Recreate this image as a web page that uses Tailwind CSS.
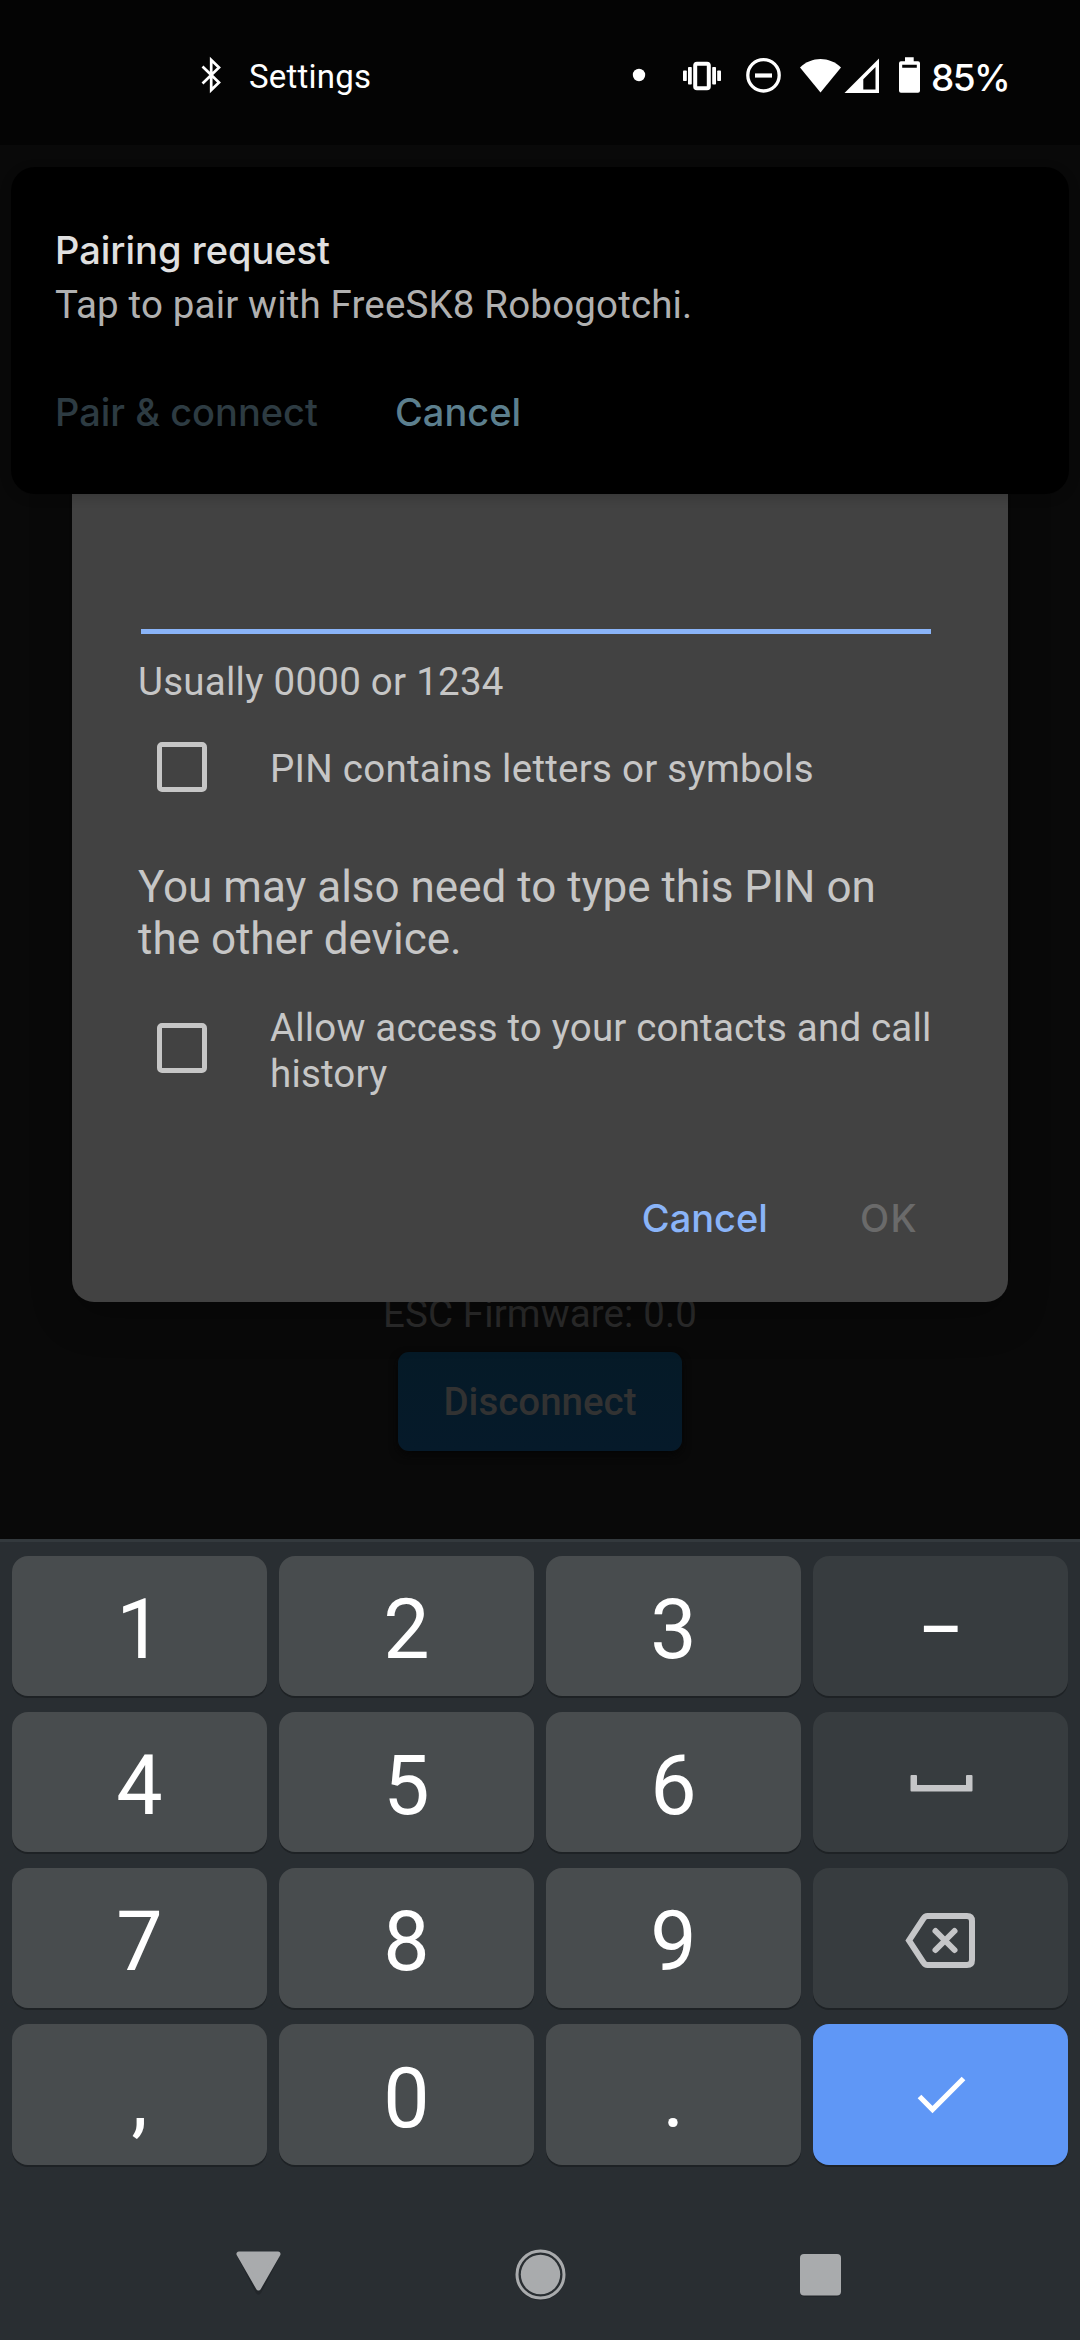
<!DOCTYPE html>
<html lang="en">
<head>
<meta charset="utf-8">
<title>Pairing request</title>
<script src="https://cdn.jsdelivr.net/npm/@tailwindcss/browser@4"></script>
</head>
<body class="bg-[#090909]">
<div class="relative flex h-[2340px] w-[1080px] flex-col overflow-hidden bg-[#090909] font-['Roboto',sans-serif] whitespace-nowrap">

  <!-- Status bar -->
  <header class="flex h-[145px] shrink-0 items-start bg-[#040404] pl-[200px] text-white">
    <svg class="mt-[56px] h-[38px] w-[24px]" viewBox="0 0 24 38" fill="none" stroke="#fff" stroke-width="2.7"><path d="M2.5 10.5 19 26.500 11.200 34V4L19 11.500 2.500 27.500"/></svg>
    <span class="ml-[25px] mt-[54px] text-[33px] leading-[46px] tracking-[0.22px]">Settings</span>
    <div class="ml-auto mr-[70px] flex items-start">
      <svg class="mt-[56px] h-[40px] w-[295px]" viewBox="0 0 295 40" fill="none">
        <circle cx="7" cy="19" r="6.200" fill="#fff"/>
        <g fill="#fff">
          <rect x="51" y="14.500" width="3.800" height="10.500" rx="0.800"/><rect x="56" y="11" width="3.800" height="17.500" rx="0.800"/>
          <rect x="80.200" y="11" width="3.800" height="17.500" rx="0.800"/><rect x="85.200" y="14.500" width="3.800" height="10.500" rx="0.800"/>
        </g>
        <rect x="63.200" y="7.800" width="13.600" height="24.400" rx="1.800" stroke="#fff" stroke-width="4"/>
        <circle cx="131.500" cy="19.300" r="15.700" stroke="#fff" stroke-width="3.300"/>
        <path d="M123 19.500H140" stroke="#fff" stroke-width="4.200"/>
        <path d="M168 11.500C179.500 0 197.500 0 209 11.500L188.500 36.500Z" fill="#fff"/>
        <path d="M212.500 37 247 2.500V37ZM231.300 33.500H243.500V11L231.300 23.200Z" fill="#fff" fill-rule="evenodd"/>
        <path d="M273 1.300h8.700v3.900h4.300a2 2 0 0 1 2 2v27.500a2 2 0 0 1-2 2h-17a2 2 0 0 1-2-2v-27.500a2 2 0 0 1 2-2h4ZM270.200 8.700v3h14.600v-3Z" fill="#fff" fill-rule="evenodd"/>
      </svg>
      <span class="ml-[4px] mt-[55px] w-[79px] font-['Inter',sans-serif] text-[37px] font-medium leading-[46px] tracking-[-1.600px]">85%</span>
    </div>
  </header>

  <!-- Dimmed app behind the dialog -->
  <main class="flex h-[1394px] shrink-0 flex-col items-center pt-[1146px]">
    <p class="text-[38.500px] leading-[46px] tracking-[0.100px] text-[#2c2c2c]">ESC Firmware: 0.0</p>
    <button class="mt-[15px] h-[99px] w-[284px] rounded-[11px] bg-linear-to-b from-[#051a27] to-[#061a2a] text-[38.500px] font-medium leading-[46px] text-[#323232] shadow-[0_4px_8px_#050505]">Disconnect</button>
  </main>

  <!-- Keyboard -->
  <section class="flex grow flex-col border-t-[3px] border-[#33393d] bg-[#292e32]">
    <div class="grid grid-cols-4 gap-x-[12px] gap-y-[16px] px-[12px] pt-[14px] text-center text-[82.500px] leading-[148px] text-white">
      <div class="h-[140px] rounded-[16px] bg-[#484c4e] shadow-[0_2px_0_#1e2225]">1</div>
      <div class="h-[140px] rounded-[16px] bg-[#484c4e] shadow-[0_2px_0_#1e2225]">2</div>
      <div class="h-[140px] rounded-[16px] bg-[#484c4e] shadow-[0_2px_0_#1e2225]">3</div>
      <div class="h-[140px] rounded-[16px] bg-[#373c3f] shadow-[0_2px_0_#1e2225]">−</div>
      <div class="h-[140px] rounded-[16px] bg-[#484c4e] shadow-[0_2px_0_#1e2225]">4</div>
      <div class="h-[140px] rounded-[16px] bg-[#484c4e] shadow-[0_2px_0_#1e2225]">5</div>
      <div class="h-[140px] rounded-[16px] bg-[#484c4e] shadow-[0_2px_0_#1e2225]">6</div>
      <div class="flex h-[140px] items-center justify-center rounded-[16px] bg-[#373c3f] shadow-[0_2px_0_#1e2225]">
        <svg class="h-[80px] w-[80px]" viewBox="0 0 80 80" fill="#c5c6c8"><path d="M9.500 34a1 1 0 0 1 1-1H15a1 1 0 0 1 1 1v9h49v-9a1 1 0 0 1 1-1h4.500a1 1 0 0 1 1 1v14.500a1 1 0 0 1-1 1H10.500a1 1 0 0 1-1-1Z"/></svg>
      </div>
      <div class="h-[140px] rounded-[16px] bg-[#484c4e] shadow-[0_2px_0_#1e2225]">7</div>
      <div class="h-[140px] rounded-[16px] bg-[#484c4e] shadow-[0_2px_0_#1e2225]">8</div>
      <div class="h-[140px] rounded-[16px] bg-[#484c4e] shadow-[0_2px_0_#1e2225]">9</div>
      <div class="flex h-[140px] items-center justify-center rounded-[16px] bg-[#373c3f] shadow-[0_2px_0_#1e2225]">
        <svg class="h-[80px] w-[80px]" viewBox="0 0 80 80" fill="none" stroke="#c5c6c8" stroke-width="6"><path d="M8 42.500 22.500 20.500Q24 18 26.500 18H66Q71 18 71 23V62Q71 67 66 67H26.500Q24 67 22.500 64.500Z"/><path d="M34.500 33 53.500 52M53.500 33 34.500 52" stroke-linecap="round"/></svg>
      </div>
      <div class="h-[141px] rounded-[16px] bg-[#484c4e] leading-[149px] shadow-[0_2px_0_#1e2225]">,</div>
      <div class="h-[141px] rounded-[16px] bg-[#484c4e] leading-[149px] shadow-[0_2px_0_#1e2225]">0</div>
      <div class="h-[141px] rounded-[16px] bg-[#484c4e] leading-[149px] shadow-[0_2px_0_#1e2225]">.</div>
      <div class="flex h-[141px] items-center justify-center rounded-[16px] bg-[#5f97f6] shadow-[0_2px_0_#1e2225]">
        <svg class="h-[80px] w-[80px]" viewBox="0 0 80 80" fill="none" stroke="#fff" stroke-width="5.200"><path d="M18.500 41.500 31.500 54.500 62.500 23.500"/></svg>
      </div>
    </div>

    <!-- Navigation bar -->
    <nav class="mt-auto flex h-[132px] items-center pb-[1px]">
      <svg class="ml-[228px] h-[60px] w-[60px]" viewBox="0 0 60 60"><path d="M13 13.500H48L30.500 47.500Z" fill="#22262a" stroke="#22262a" stroke-width="6" stroke-linejoin="round"/><path d="M11 10H50L30.500 44Z" fill="#a9abad" stroke="#a9abad" stroke-width="5" stroke-linejoin="round"/></svg>
      <svg class="ml-[222px] h-[60px] w-[60px]" viewBox="0 0 60 60"><circle cx="30.500" cy="32.500" r="24" fill="#22262a"/><circle cx="30.500" cy="30.500" r="23.500" fill="#292e32" stroke="#a9abad" stroke-width="3"/><circle cx="30.500" cy="30.500" r="19.700" fill="#a9abad"/></svg>
      <svg class="ml-[220px] h-[60px] w-[60px]" viewBox="0 0 60 60"><rect x="10" y="12" width="41" height="41" rx="5" fill="#22262a"/><rect x="10" y="10" width="41" height="41.500" rx="4" fill="#a9abad"/></svg>
    </nav>
  </section>

  <!-- Pairing dialog -->
  <section class="absolute left-[72px] top-[400px] flex h-[902px] w-[936px] flex-col rounded-b-[22px] bg-[#424242] px-[66px] text-[38.500px] leading-[46px] text-[#c6c6c6] shadow-[0_14px_40px_#00000040]">
    <div class="ml-[3px] h-[234px] w-[790px] shrink-0 border-b-[5px] border-[#8ab4f8]"></div>
    <p class="mt-[25px] tracking-[0.250px]">Usually 0000 or 1234</p>
    <div class="mt-[37px] flex h-[50px]">
      <span class="ml-[19px] h-[50px] w-[50px] shrink-0 rounded-[5px] border-[5.500px] border-[#c6c6c6]"></span>
      <span class="ml-[63px] mt-[4px] tracking-[0.260px]">PIN contains letters or symbols</span>
    </div>
    <p class="mt-[69px] text-[44px] leading-[52px]">You may also need to type this PIN on<br>the other device.</p>
    <div class="mt-[40px] flex h-[92px]">
      <span class="ml-[19px] mt-[18px] h-[50px] w-[50px] shrink-0 rounded-[5px] border-[5.500px] border-[#c6c6c6]"></span>
      <span class="ml-[63px] tracking-[0.170px]">Allow access to your contacts and call<br>history</span>
    </div>
    <div class="mt-[98px] flex justify-end pr-[24px] font-['Inter',sans-serif] text-[38px] font-medium">
      <span class="text-[#8ab4f8]">Cancel</span>
      <span class="ml-[92px] tracking-[1.400px] text-[#6a6a6a]">OK</span>
    </div>
  </section>

  <!-- Heads-up notification -->
  <section class="absolute left-[11px] top-[167px] h-[327px] w-[1058px] rounded-[24px] bg-black pl-[43px] pt-[60px] shadow-[0_3px_12px_#00000033]">
    <h1 class="ml-[1px] font-['Inter',sans-serif] text-[38px] font-medium leading-[46px] text-[#e0e0e0]">Pairing request</h1>
    <p class="ml-[1px] mt-[9px] text-[38.500px] leading-[46px] tracking-[0.160px] text-[#b0b0b0]">Tap to pair with FreeSK8 Robogotchi.</p>
    <div class="ml-[1px] mt-[61px] flex font-['Inter',sans-serif] text-[38px] font-medium leading-[46px]">
      <span class="text-[#2d3b42]">Pair &amp; connect</span>
      <span class="ml-[77px] text-[#5c7f8e]">Cancel</span>
    </div>
  </section>
</div>
</body>
</html>
